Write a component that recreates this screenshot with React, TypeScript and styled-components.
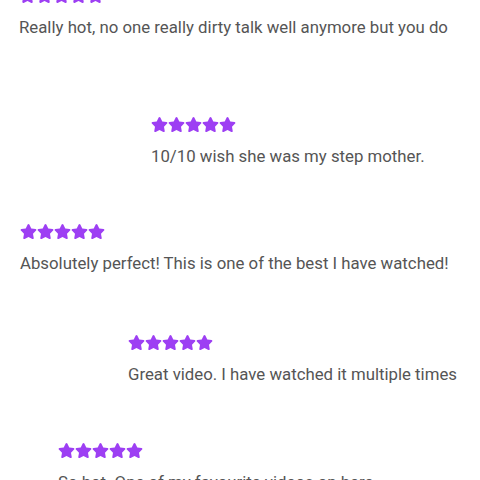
import React from "react";
import styled, { createGlobalStyle } from "styled-components";
import { FaStar } from "react-icons/fa";

const GlobalStyle = createGlobalStyle`
    html, body {
        margin: 0;
        padding: 0;
        background: #ffffff;
        overflow: hidden;
    }
    body {
        font-family: Roboto, "Liberation Sans", Arial, sans-serif;
    }
`;

type Review = {
    text: string;
    rating: number;
    left: number;
    top: number;
};

const reviews: Review[] = [
    { text: "Really hot, no one really dirty talk well anymore but you do", rating: 5, left: 19, top: -13 },
    { text: "10/10 wish she was my step mother.", rating: 5, left: 151, top: 77 },
    { text: "Absolutely perfect! This is one of the best I have watched!", rating: 5, left: 20, top: 55 },
    { text: "Great video. I have watched it multiple times", rating: 5, left: 128, top: 59 },
    { text: "So hot. One of my favourite videos on here", rating: 5, left: 58, top: 56 },
];

const Page = styled.div`
    width: 480px;
    height: 480px;
    overflow: hidden;
    display: flex;
    flex-direction: column;
    align-items: flex-start;
`;

const ReviewItem = styled.div<{ $left: number; $top: number }>`
    display: flex;
    flex-direction: column;
    align-items: flex-start;
    gap: 11px;
    margin-left: ${(p) => p.$left}px;
    margin-top: ${(p) => p.$top}px;
    flex-shrink: 0;
`;

const Stars = styled.div`
    display: flex;
    align-items: center;
    height: 17px;
    color: #9d3ff3;

    svg {
        width: 17px;
        height: 17px;
        display: block;
    }
`;

const Text = styled.p`
    margin: 0;
    font-size: 16.8px;
    line-height: 24px;
    color: #555555;
    white-space: nowrap;
`;

export default function App() {
    return (
        <>
            <GlobalStyle />
            <Page>
                {reviews.map((r, i) => (
                    <ReviewItem key={i} $left={r.left} $top={r.top}>
                        <Stars>
                            {Array.from({ length: r.rating }).map((_, j) => (
                                <FaStar key={j} />
                            ))}
                        </Stars>
                        <Text>{r.text}</Text>
                    </ReviewItem>
                ))}
            </Page>
        </>
    );
}
